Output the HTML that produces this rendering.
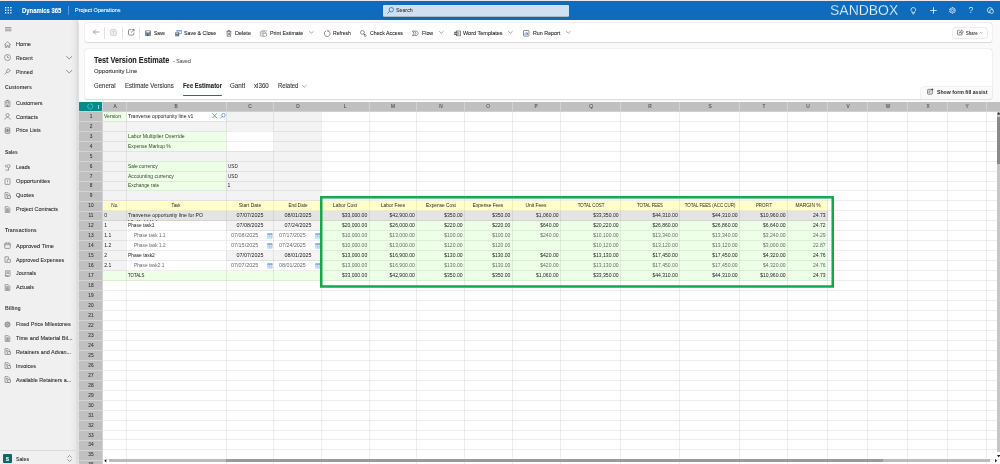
<!DOCTYPE html>
<html lang="en"><head><meta charset="utf-8"><title>Test Version Estimate - Dynamics 365</title>
<style>
html,body{margin:0;padding:0;background:#f5f5f5;}
body{width:1000px;height:464px;overflow:hidden;position:relative;font-family:"Liberation Sans",sans-serif;}
#root{position:absolute;left:0;top:0;width:1000px;height:464px;overflow:hidden;background:#fafafa;}
#txt,#over{position:absolute;left:0;top:0;width:1000px;height:464px;overflow:hidden;will-change:transform;}
.r{position:absolute;display:block;}
.t{position:absolute;white-space:nowrap;display:block;margin:0;padding:0;line-height:20px;height:20px;-webkit-text-stroke:0.08px currentColor;}
svg{overflow:visible;}
</style></head><body><div id="root">
<div class="r" style="left:0.00px;top:0.00px;width:1000.00px;height:19.70px;background:#0f6cbd;"></div>
<div class="r" style="left:0.00px;top:0.00px;width:1000.00px;height:1.00px;background:#ede5ea;"></div>
<svg class="r" style="left:5.20px;top:7.20px;" width="7" height="7" viewBox="0 0 7 7"><rect x="0.00" y="0.00" width="1.3" height="1.3" fill="#fff"/><rect x="0.00" y="2.60" width="1.3" height="1.3" fill="#fff"/><rect x="0.00" y="5.20" width="1.3" height="1.3" fill="#fff"/><rect x="2.60" y="0.00" width="1.3" height="1.3" fill="#fff"/><rect x="2.60" y="2.60" width="1.3" height="1.3" fill="#fff"/><rect x="2.60" y="5.20" width="1.3" height="1.3" fill="#fff"/><rect x="5.20" y="0.00" width="1.3" height="1.3" fill="#fff"/><rect x="5.20" y="2.60" width="1.3" height="1.3" fill="#fff"/><rect x="5.20" y="5.20" width="1.3" height="1.3" fill="#fff"/></svg>
<div class="r" style="left:68.20px;top:6.00px;width:0.50px;height:8.50px;background:rgba(255,255,255,.32);"></div>
<div class="r" style="left:382.80px;top:4.60px;width:186.00px;height:12.00px;background:#cfe0f1;border-radius:1px;box-shadow:inset 0 -0.6px 0 rgba(0,0,0,.35);"></div>
<svg class="r" style="left:387.00px;top:7.00px;" width="7" height="7" viewBox="0 0 7 7"><circle cx="4.3" cy="2.7" r="2.2" fill="none" stroke="#1b62b0" stroke-width=".7"/><path d="M2.7 4.3 L0.3 6.7" stroke="#1b62b0" stroke-width=".7" fill="none"/></svg>
<svg class="r" style="left:910.00px;top:7.00px;" width="7" height="8" viewBox="0 0 7 8"><path d="M3.3 0.5 a2.3 2.3 0 0 1 1.3 4.2 v1 h-2.6 v-1 a2.3 2.3 0 0 1 1.3 -4.2z M2.3 6.8h2" fill="none" stroke="#fff" stroke-width=".7"/></svg>
<svg class="r" style="left:929.50px;top:7.00px;" width="7" height="7" viewBox="0 0 7 7"><path d="M3.5 0.3v6.4M0.3 3.5h6.4" stroke="#fff" stroke-width=".8" fill="none"/></svg>
<svg class="r" style="left:949.00px;top:7.00px;" width="7" height="7" viewBox="0 0 7 7"><circle cx="3.4" cy="3.4" r="2.6" fill="none" stroke="#fff" stroke-width="1.1" stroke-dasharray="1.1 .55"/><circle cx="3.4" cy="3.4" r="1.1" fill="none" stroke="#fff" stroke-width=".6"/></svg>
<svg class="r" style="left:986.50px;top:7.00px;" width="7" height="7" viewBox="0 0 7 7"><circle cx="3" cy="3.2" r="2.6" fill="none" stroke="#fff" stroke-width=".7"/><circle cx="4.6" cy="4.4" r="1.9" fill="#0f6cbd" stroke="#fff" stroke-width=".7"/></svg>
<div class="r" style="left:0.00px;top:19.70px;width:78.20px;height:444.30px;background:linear-gradient(to right,#f0f0f0 0,#f0f0f0 70px,#eaeaea 75px,#d9d9d9 78.2px);box-shadow:.5px 0 .8px rgba(0,0,0,.10);"></div>
<svg class="r" style="left:4.60px;top:26.80px;" width="6.4" height="4.4" viewBox="0 0 6.4 4.4"><path d="M0 .6h6.4 M0 2.2h6.4 M0 3.8h6.4" stroke="#555" stroke-width=".55" fill="none"/></svg>
<svg class="r" style="left:3.90px;top:40.60px;" width="7" height="7" viewBox="0 0 7 7"><path d="M0.4 3.6 L3.5 0.7 L6.6 3.6 M1.3 3 V6.4 H2.8 V4.4 H4.2 V6.4 H5.7 V3" fill="none" stroke="#686868" stroke-width=".6"/></svg>
<svg class="r" style="left:3.90px;top:54.30px;" width="7" height="7" viewBox="0 0 7 7"><circle cx="3.5" cy="3.5" r="3" fill="none" stroke="#686868" stroke-width=".6"/><path d="M3.5 1.7 V3.7 H5" fill="none" stroke="#686868" stroke-width=".6"/></svg>
<svg class="r" style="left:66.00px;top:56.40px;" width="6.4" height="3.2" viewBox="0 0 6.4 3.2"><path d="M0.2 0.2 L3.20 2.90 L6.20 0.2" fill="none" stroke="#5a5a5a" stroke-width="0.65"/></svg>
<svg class="r" style="left:3.90px;top:68.00px;" width="7" height="7" viewBox="0 0 7 7"><path d="M4.2 0.6 L6.4 2.8 L5.2 3.2 L4 4.8 L2.2 3 L3.8 1.8 Z M3 4 L0.5 6.5" fill="none" stroke="#686868" stroke-width=".6"/></svg>
<svg class="r" style="left:66.00px;top:70.10px;" width="6.4" height="3.2" viewBox="0 0 6.4 3.2"><path d="M0.2 0.2 L3.20 2.90 L6.20 0.2" fill="none" stroke="#5a5a5a" stroke-width="0.65"/></svg>
<svg class="r" style="left:3.90px;top:99.50px;" width="7" height="7" viewBox="0 0 7 7"><rect x="1.1" y="1" width="4.8" height="5.6" rx=".3" fill="none" stroke="#686868" stroke-width=".6"/><path d="M2.5 0.4h2 M2.2 2.5h1 M3.8 2.5h1 M2.2 3.9h1 M3.8 3.9h1 M2.9 6.5v-1.2h1.2v1.2" fill="none" stroke="#555" stroke-width=".7"/></svg>
<svg class="r" style="left:3.90px;top:113.20px;" width="7" height="7" viewBox="0 0 7 7"><circle cx="3.5" cy="2.1" r="1.6" fill="none" stroke="#686868" stroke-width=".6"/><path d="M0.8 6.6 C0.8 3.8 6.2 3.8 6.2 6.6" fill="none" stroke="#686868" stroke-width=".6"/></svg>
<svg class="r" style="left:3.90px;top:126.90px;" width="7" height="7" viewBox="0 0 7 7"><rect x="1.2" y="0.8" width="4.6" height="5.6" rx=".7" fill="none" stroke="#686868" stroke-width=".6"/><path d="M1.2 2.3h4.6 M1.2 3.6h4.6 M1.2 4.9h4.6 M3.5 2.3v2.6" fill="none" stroke="#686868" stroke-width=".6" /></svg>
<svg class="r" style="left:3.90px;top:163.70px;" width="7" height="7" viewBox="0 0 7 7"><circle cx="4.6" cy="2.2" r="1.5" fill="none" stroke="#686868" stroke-width=".6"/><path d="M2.6 3.2 C0.8 3.2 0.8 0.8 2.6 1 M4.6 3.7 V6.6 M1.4 5.8 C2.4 6.8 3.6 6.6 4.6 5.2" fill="none" stroke="#686868" stroke-width=".6"/></svg>
<svg class="r" style="left:3.90px;top:177.60px;" width="7" height="7" viewBox="0 0 7 7"><rect x="1" y="0.8" width="5" height="5.6" rx=".5" fill="none" stroke="#686868" stroke-width=".6"/><path d="M3.5 2.2v1.9 M3.5 4.9v.5" fill="none" stroke="#686868" stroke-width=".6"/></svg>
<svg class="r" style="left:3.90px;top:191.70px;" width="7" height="7" viewBox="0 0 7 7"><path d="M1 0.7 H4.2 L5.6 2.1 V6.4 H1 Z M2 2.6h2 M2 3.8h1.2" fill="none" stroke="#686868" stroke-width=".6"/><rect x="3.6" y="3.6" width="2.9" height="2.8" rx=".4" fill="#efefef" stroke="#686868" stroke-width=".6"/></svg>
<svg class="r" style="left:3.90px;top:205.70px;" width="7" height="7" viewBox="0 0 7 7"><path d="M1.2 0.7 H4.3 L5.8 2.2 V6.4 H1.2 Z" fill="none" stroke="#686868" stroke-width=".6"/><path d="M2.2 2.9h2.6 M2.2 4.1h2.6 M2.2 5.2h2.6" fill="none" stroke="#555" stroke-width=".7"/></svg>
<svg class="r" style="left:3.90px;top:242.10px;" width="7" height="7" viewBox="0 0 7 7"><rect x="0.7" y="1.2" width="5.6" height="5.2" rx=".6" fill="none" stroke="#686868" stroke-width=".6"/><path d="M0.7 2.8h5.6 M2.2 0.4v1.4 M4.8 0.4v1.4" fill="none" stroke="#686868" stroke-width=".6"/></svg>
<svg class="r" style="left:3.90px;top:256.00px;" width="7" height="7" viewBox="0 0 7 7"><path d="M1 0.8 H4.4 V3 M1 0.8 V6.3 H3" fill="none" stroke="#686868" stroke-width=".6"/><rect x="3.2" y="3.4" width="3.2" height="3" rx=".4" fill="none" stroke="#686868" stroke-width=".6"/></svg>
<svg class="r" style="left:3.90px;top:269.90px;" width="7" height="7" viewBox="0 0 7 7"><path d="M1.6 0.8 H6 V5.4 C6 6.6 4.4 6.6 4.4 5.6 H1.2 C1.2 6.6 2.6 6.6 4.6 6.5 M1.6 0.8 V5.4 M2.6 2.2h2.4 M2.6 3.4h2.4" fill="none" stroke="#686868" stroke-width=".6"/></svg>
<svg class="r" style="left:3.90px;top:283.90px;" width="7" height="7" viewBox="0 0 7 7"><path d="M1.2 0.7 H4.3 L5.8 2.2 V6.4 H1.2 Z" fill="none" stroke="#686868" stroke-width=".6"/><path d="M2.2 2.9h2.6 M2.2 4.1h2.6 M2.2 5.2h2.6" fill="none" stroke="#555" stroke-width=".7"/></svg>
<svg class="r" style="left:3.90px;top:320.80px;" width="7" height="7" viewBox="0 0 7 7"><circle cx="3.5" cy="3.5" r="2.7" fill="#9a9a9a" stroke="#8a8a8a" stroke-width=".5"/><circle cx="3.5" cy="3.5" r="1.2" fill="none" stroke="#d8d8d8" stroke-width=".5"/></svg>
<svg class="r" style="left:3.90px;top:334.50px;" width="7" height="7" viewBox="0 0 7 7"><path d="M1.2 0.7 H4.3 L5.8 2.2 V6.4 H1.2 Z" fill="none" stroke="#686868" stroke-width=".6"/><path d="M2.2 2.9h2.6 M2.2 4.1h2.6 M2.2 5.2h2.6" fill="none" stroke="#555" stroke-width=".7"/></svg>
<svg class="r" style="left:3.90px;top:348.30px;" width="7" height="7" viewBox="0 0 7 7"><path d="M1 0.7 H4.2 L5.6 2.1 V6.4 H1 Z M2 2.6h2 M2 3.8h1.2" fill="none" stroke="#686868" stroke-width=".6"/><rect x="3.6" y="3.6" width="2.9" height="2.8" rx=".4" fill="#efefef" stroke="#686868" stroke-width=".6"/></svg>
<svg class="r" style="left:3.90px;top:362.20px;" width="7" height="7" viewBox="0 0 7 7"><path d="M1 0.7 H4.2 L5.6 2.1 V6.4 H1 Z M2 2.6h2 M2 3.8h1.2" fill="none" stroke="#686868" stroke-width=".6"/><rect x="3.6" y="3.6" width="2.9" height="2.8" rx=".4" fill="#efefef" stroke="#686868" stroke-width=".6"/></svg>
<svg class="r" style="left:3.90px;top:376.40px;" width="7" height="7" viewBox="0 0 7 7"><path d="M1 0.7 H4.2 L5.6 2.1 V6.4 H1 Z M2 2.6h2 M2 3.8h1.2" fill="none" stroke="#686868" stroke-width=".6"/><rect x="3.6" y="3.6" width="2.9" height="2.8" rx=".4" fill="#efefef" stroke="#686868" stroke-width=".6"/></svg>
<div class="r" style="left:0.00px;top:449.80px;width:78.20px;height:0.50px;background:#dcdcdc;"></div>
<div class="r" style="left:2.60px;top:453.80px;width:9.80px;height:9.40px;background:#0b6a63;border-radius:1px;"></div>
<svg class="r" style="left:66.60px;top:455.20px;" width="5" height="7" viewBox="0 0 5 7"><path d="M0.4 2.6 L2.5 0.5 L4.6 2.6 M0.4 4.4 L2.5 6.5 L4.6 4.4" fill="none" stroke="#5a5a5a" stroke-width=".6"/></svg>
<div class="r" style="left:84.60px;top:23.20px;width:907.60px;height:18.80px;background:#fff;border-radius:2.6px;box-shadow:0 0 1.2px rgba(0,0,0,.22),0 .5px 1px rgba(0,0,0,.10);"></div>
<svg class="r" style="left:93.00px;top:29.30px;" width="6.5" height="6" viewBox="0 0 6.5 6"><path d="M0.4 3 H6.2 M2.9 0.5 L0.4 3 L2.9 5.5" fill="none" stroke="#5a5a5a" stroke-width=".55" stroke-linejoin="miter"/></svg>
<div class="r" style="left:104.35px;top:27.00px;width:0.50px;height:11.60px;background:#e2e2e2;"></div>
<svg class="r" style="left:110.00px;top:29.20px;" width="7" height="7" viewBox="0 0 7 7"><rect x=".4" y=".4" width="6.2" height="6.2" rx="2" fill="#f0f0f0" stroke="#c2c2c2" stroke-width=".7"/><path d="M2.3 2.4h2.4 M3.5 2.4v2.6" stroke="#c2c2c2" stroke-width=".7" fill="none"/></svg>
<div class="r" style="left:122.15px;top:27.00px;width:0.50px;height:11.60px;background:#e2e2e2;"></div>
<svg class="r" style="left:128.00px;top:29.40px;" width="6.5" height="6.5" viewBox="0 0 6.5 6.5"><path d="M3.4 0.6 H1.4 Q0.5 0.6 0.5 1.5 V5.2 Q0.5 6.1 1.4 6.1 H4.9 Q5.8 6.1 5.8 5.2 V3.6 M3.2 3.4 L6 0.6 M4.2 0.5 H6.1 V2.4" fill="none" stroke="#5a5a5a" stroke-width=".65"/></svg>
<div class="r" style="left:139.35px;top:27.00px;width:0.50px;height:11.60px;background:#e2e2e2;"></div>
<svg class="r" style="left:144.70px;top:29.70px;" width="7" height="7" viewBox="0 0 7 7"><rect x=".3" y=".6" width="5.4" height="5.3" rx=".4" fill="#5c5c5c"/><rect x="1.3" y=".9" width="3.3" height="1.7" fill="#f4f4f4"/><rect x="1" y="3.4" width="4" height="2.3" fill="#5b9bd5"/><rect x="2" y="4.3" width="1.2" height="1.4" fill="#444"/></svg>
<svg class="r" style="left:174.80px;top:29.70px;" width="7" height="7" viewBox="0 0 7 7"><rect x="1.9" y=".5" width="4.4" height="3.2" fill="#fff" stroke="#5b8fd6" stroke-width=".6"/><rect x="1.9" y=".5" width="4.4" height=".9" fill="#5b8fd6"/><rect x=".3" y="2.3" width="3.9" height="3.9" rx=".3" fill="#555"/><rect x="1" y="2.6" width="2.3" height="1.1" fill="#f0f0f0"/><rect x=".9" y="4.5" width="2.7" height="1.6" fill="#5b9bd5"/></svg>
<svg class="r" style="left:226.10px;top:29.70px;" width="7" height="7" viewBox="0 0 7 7"><path d="M0.5 1.4 H5.3 M2 1.3 V0.5 H3.8 V1.3 M1 1.5 L1.3 6.3 H4.5 L4.8 1.5 M2.3 2.6 V5.2 M3.5 2.6 V5.2" fill="none" stroke="#444" stroke-width=".6"/></svg>
<svg class="r" style="left:260.20px;top:29.70px;" width="7" height="7" viewBox="0 0 7 7"><rect x=".4" y="1.4" width="4.8" height="4.8" rx=".6" fill="#f3f3f3" stroke="#8a8a8a" stroke-width=".6"/><path d="M1.4 2.8h2.6 M1.4 4h1.6" stroke="#8a8a8a" stroke-width=".5"/><rect x="3.1" y="3.3" width="3.4" height="3" rx=".4" fill="#fff" stroke="#7a7a7a" stroke-width=".6"/><path d="M1.6 .5 h4.6 v2.4" fill="none" stroke="#9a9a9a" stroke-width=".5"/></svg>
<svg class="r" style="left:309.00px;top:31.30px;" width="4.8" height="2.6" viewBox="0 0 4.8 2.6"><path d="M0.2 0.2 L2.40 2.30 L4.60 0.2" fill="none" stroke="#5a5a5a" stroke-width="0.55"/></svg>
<svg class="r" style="left:324.10px;top:29.70px;" width="7" height="7" viewBox="0 0 7 7"><path d="M4.3 0.9 A2.9 2.9 0 1 1 2.1 0.9" fill="none" stroke="#444" stroke-width=".6"/><path d="M3.2 0.1 L4.5 0.9 L3.6 2" fill="none" stroke="#444" stroke-width=".6"/></svg>
<svg class="r" style="left:360.30px;top:29.70px;" width="7" height="7" viewBox="0 0 7 7"><circle cx="2.4" cy="2.4" r="1.9" fill="none" stroke="#444" stroke-width=".6"/><path d="M3.8 3.8 L5.6 5.6" stroke="#444" stroke-width=".9"/><circle cx="5.2" cy="5.4" r="1" fill="#fff" stroke="#444" stroke-width=".5"/></svg>
<svg class="r" style="left:412.00px;top:29.70px;" width="7" height="7" viewBox="0 0 7 7"><path d="M0.4 1 H2.2 L4 3.3 L2.2 5.6 H0.4 L2.1 3.3 Z M2.9 1 H4.6 L6.5 3.3 L4.6 5.6 H2.9" fill="none" stroke="#444" stroke-width=".6"/></svg>
<svg class="r" style="left:438.70px;top:31.30px;" width="4.8" height="2.6" viewBox="0 0 4.8 2.6"><path d="M0.2 0.2 L2.40 2.30 L4.60 0.2" fill="none" stroke="#5a5a5a" stroke-width="0.55"/></svg>
<svg class="r" style="left:453.50px;top:29.70px;" width="7" height="7" viewBox="0 0 7 7"><rect x="2.4" y="1" width="3.9" height="4.8" fill="#fff" stroke="#444" stroke-width=".6"/><path d="M3.4 2.4h2 M3.4 3.4h2 M3.4 4.4h2" stroke="#444" stroke-width=".4"/><rect x=".3" y="1.8" width="3" height="3.2" fill="#4d4d4d"/><path d="M.9 2.6 l.45 1.6 l.45 -1.4 l.45 1.4 l.45 -1.6" stroke="#fff" stroke-width=".35" fill="none"/></svg>
<svg class="r" style="left:508.40px;top:31.30px;" width="4.8" height="2.6" viewBox="0 0 4.8 2.6"><path d="M0.2 0.2 L2.40 2.30 L4.60 0.2" fill="none" stroke="#5a5a5a" stroke-width="0.55"/></svg>
<svg class="r" style="left:523.20px;top:29.70px;" width="7" height="7" viewBox="0 0 7 7"><rect x=".5" y=".5" width="5.4" height="5.6" rx=".6" fill="#fff" stroke="#444" stroke-width=".6"/><path d="M1.9 4.9v-1.6 M3.2 4.9v-3 M4.5 4.9v-2.2" stroke="#3a66b0" stroke-width=".7"/></svg>
<svg class="r" style="left:566.10px;top:31.30px;" width="4.8" height="2.6" viewBox="0 0 4.8 2.6"><path d="M0.2 0.2 L2.40 2.30 L4.60 0.2" fill="none" stroke="#5a5a5a" stroke-width="0.55"/></svg>
<div class="r" style="left:953.00px;top:27.50px;width:34.40px;height:10.00px;background:#fff;border-radius:1.8px;box-shadow:0 0 0 .5px #dcdcdc;"></div>
<svg class="r" style="left:957.00px;top:29.40px;" width="7" height="7" viewBox="0 0 7 7"><path d="M2.8 1.2 H1.4 Q.5 1.2 .5 2.1 V5 Q.5 5.9 1.4 5.9 H4.4 Q5.3 5.9 5.3 5 V4.4 M2.2 4.2 C2.2 2.8 3.2 2.2 4.4 2.2 V1 L6.4 2.8 L4.4 4.6 V3.4 C3.4 3.4 2.8 3.6 2.2 4.2Z" fill="none" stroke="#424242" stroke-width=".6"/></svg>
<svg class="r" style="left:980.40px;top:32.00px;" width="2.8" height="1.6" viewBox="0 0 2.8 1.6"><path d="M0.2 0.2 L1.40 1.30 L2.60 0.2" fill="none" stroke="#5a5a5a" stroke-width="0.5"/></svg>
<div class="r" style="left:84.50px;top:48.50px;width:907.70px;height:50.20px;background:#fff;border-radius:2.6px;box-shadow:0 0 1.2px rgba(0,0,0,.22),0 .5px 1px rgba(0,0,0,.10);"></div>
<div class="r" style="left:183.00px;top:94.50px;width:39.00px;height:1.10px;background:#0f6cbd;border-radius:.5px;"></div>
<svg class="r" style="left:301.60px;top:84.80px;" width="4.6" height="2.5" viewBox="0 0 4.6 2.5"><path d="M0.2 0.2 L2.30 2.20 L4.40 0.2" fill="none" stroke="#5a5a5a" stroke-width="0.55"/></svg>
<div class="r" style="left:921.00px;top:86.50px;width:71.20px;height:12.20px;background:#fafafa;border-radius:2.6px 0 2.6px 0;box-shadow:0 0 0 .5px #e6e6e6;"></div>
<svg class="r" style="left:927.00px;top:88.30px;" width="7" height="7" viewBox="0 0 7 7"><rect x=".5" y="1.4" width="4.8" height="4.8" rx=".7" fill="#e8e8e8" stroke="#4a4a4a" stroke-width=".6"/><path d="M1.6 3h2.2 M1.6 4.4h1.4" stroke="#4a4a4a" stroke-width=".5"/><path d="M5.2 0 l.4 1 l1 .4 l-1 .4 l-.4 1 l-.4 -1 l-1 -.4 l1 -.4z" fill="#333"/></svg>
<div class="r" style="left:79.00px;top:101.70px;width:921.00px;height:362.30px;background:#fff;"></div>
<div class="r" style="left:102.80px;top:111.30px;width:218.70px;height:89.64px;background:#f3f3f3;"></div>
<div class="r" style="left:102.80px;top:111.30px;width:23.70px;height:9.96px;background:#edffe6;"></div>
<div class="r" style="left:126.50px;top:111.30px;width:99.50px;height:9.96px;background:#fff;"></div>
<div class="r" style="left:126.50px;top:131.22px;width:99.50px;height:19.92px;background:#edffe6;"></div>
<div class="r" style="left:226.00px;top:131.22px;width:47.50px;height:19.92px;background:#fff;"></div>
<div class="r" style="left:126.50px;top:161.10px;width:99.50px;height:29.88px;background:#edffe6;"></div>
<div class="r" style="left:102.80px;top:200.94px;width:724.80px;height:9.96px;background:#ffffcc;"></div>
<div class="r" style="left:102.80px;top:210.90px;width:724.80px;height:9.96px;background:#e4e4e4;"></div>
<div class="r" style="left:321.50px;top:220.86px;width:506.10px;height:59.76px;background:#edffe6;"></div>
<div class="r" style="left:102.80px;top:270.66px;width:218.70px;height:9.96px;background:#edffe6;"></div>
<div class="r" style="left:102.80px;top:220.86px;width:23.70px;height:49.80px;background:#f3f3f3;"></div>
<div class="r" style="left:226.00px;top:220.86px;width:95.50px;height:9.96px;background:#f3f3f3;"></div>
<div class="r" style="left:226.00px;top:250.74px;width:95.50px;height:9.96px;background:#f3f3f3;"></div>
<div class="r" style="left:102.80px;top:120.76px;width:897.20px;height:1.00px;background:rgba(0,0,0,.065);"></div>
<div class="r" style="left:102.80px;top:130.72px;width:897.20px;height:1.00px;background:rgba(0,0,0,.065);"></div>
<div class="r" style="left:102.80px;top:140.68px;width:897.20px;height:1.00px;background:rgba(0,0,0,.065);"></div>
<div class="r" style="left:102.80px;top:150.64px;width:897.20px;height:1.00px;background:rgba(0,0,0,.065);"></div>
<div class="r" style="left:102.80px;top:160.60px;width:897.20px;height:1.00px;background:rgba(0,0,0,.065);"></div>
<div class="r" style="left:102.80px;top:170.56px;width:897.20px;height:1.00px;background:rgba(0,0,0,.065);"></div>
<div class="r" style="left:102.80px;top:180.52px;width:897.20px;height:1.00px;background:rgba(0,0,0,.065);"></div>
<div class="r" style="left:102.80px;top:190.48px;width:897.20px;height:1.00px;background:rgba(0,0,0,.065);"></div>
<div class="r" style="left:102.80px;top:200.44px;width:897.20px;height:1.00px;background:rgba(0,0,0,.065);"></div>
<div class="r" style="left:102.80px;top:210.40px;width:897.20px;height:1.00px;background:rgba(0,0,0,.065);"></div>
<div class="r" style="left:102.80px;top:220.36px;width:897.20px;height:1.00px;background:rgba(0,0,0,.065);"></div>
<div class="r" style="left:102.80px;top:230.32px;width:897.20px;height:1.00px;background:rgba(0,0,0,.065);"></div>
<div class="r" style="left:102.80px;top:240.28px;width:897.20px;height:1.00px;background:rgba(0,0,0,.065);"></div>
<div class="r" style="left:102.80px;top:250.24px;width:897.20px;height:1.00px;background:rgba(0,0,0,.065);"></div>
<div class="r" style="left:102.80px;top:260.20px;width:897.20px;height:1.00px;background:rgba(0,0,0,.065);"></div>
<div class="r" style="left:102.80px;top:270.16px;width:897.20px;height:1.00px;background:rgba(0,0,0,.065);"></div>
<div class="r" style="left:102.80px;top:280.12px;width:897.20px;height:1.00px;background:rgba(0,0,0,.065);"></div>
<div class="r" style="left:102.80px;top:290.08px;width:897.20px;height:1.00px;background:rgba(0,0,0,.065);"></div>
<div class="r" style="left:102.80px;top:300.04px;width:897.20px;height:1.00px;background:rgba(0,0,0,.065);"></div>
<div class="r" style="left:102.80px;top:310.00px;width:897.20px;height:1.00px;background:rgba(0,0,0,.065);"></div>
<div class="r" style="left:102.80px;top:319.96px;width:897.20px;height:1.00px;background:rgba(0,0,0,.065);"></div>
<div class="r" style="left:102.80px;top:329.92px;width:897.20px;height:1.00px;background:rgba(0,0,0,.065);"></div>
<div class="r" style="left:102.80px;top:339.88px;width:897.20px;height:1.00px;background:rgba(0,0,0,.065);"></div>
<div class="r" style="left:102.80px;top:349.84px;width:897.20px;height:1.00px;background:rgba(0,0,0,.065);"></div>
<div class="r" style="left:102.80px;top:359.80px;width:897.20px;height:1.00px;background:rgba(0,0,0,.065);"></div>
<div class="r" style="left:102.80px;top:369.76px;width:897.20px;height:1.00px;background:rgba(0,0,0,.065);"></div>
<div class="r" style="left:102.80px;top:379.72px;width:897.20px;height:1.00px;background:rgba(0,0,0,.065);"></div>
<div class="r" style="left:102.80px;top:389.68px;width:897.20px;height:1.00px;background:rgba(0,0,0,.065);"></div>
<div class="r" style="left:102.80px;top:399.64px;width:897.20px;height:1.00px;background:rgba(0,0,0,.065);"></div>
<div class="r" style="left:102.80px;top:409.60px;width:897.20px;height:1.00px;background:rgba(0,0,0,.065);"></div>
<div class="r" style="left:102.80px;top:419.56px;width:897.20px;height:1.00px;background:rgba(0,0,0,.065);"></div>
<div class="r" style="left:102.80px;top:429.52px;width:897.20px;height:1.00px;background:rgba(0,0,0,.065);"></div>
<div class="r" style="left:102.80px;top:439.48px;width:897.20px;height:1.00px;background:rgba(0,0,0,.065);"></div>
<div class="r" style="left:102.80px;top:449.44px;width:897.20px;height:1.00px;background:rgba(0,0,0,.065);"></div>
<div class="r" style="left:102.80px;top:459.40px;width:897.20px;height:1.00px;background:rgba(0,0,0,.065);"></div>
<div class="r" style="left:102.80px;top:469.36px;width:897.20px;height:1.00px;background:rgba(0,0,0,.065);"></div>
<div class="r" style="left:126.00px;top:111.30px;width:1.00px;height:352.70px;background:rgba(0,0,0,.065);"></div>
<div class="r" style="left:225.50px;top:111.30px;width:1.00px;height:352.70px;background:rgba(0,0,0,.065);"></div>
<div class="r" style="left:273.00px;top:111.30px;width:1.00px;height:352.70px;background:rgba(0,0,0,.065);"></div>
<div class="r" style="left:321.00px;top:111.30px;width:1.00px;height:352.70px;background:rgba(0,0,0,.065);"></div>
<div class="r" style="left:368.70px;top:111.30px;width:1.00px;height:352.70px;background:rgba(0,0,0,.065);"></div>
<div class="r" style="left:416.30px;top:111.30px;width:1.00px;height:352.70px;background:rgba(0,0,0,.065);"></div>
<div class="r" style="left:464.00px;top:111.30px;width:1.00px;height:352.70px;background:rgba(0,0,0,.065);"></div>
<div class="r" style="left:511.90px;top:111.30px;width:1.00px;height:352.70px;background:rgba(0,0,0,.065);"></div>
<div class="r" style="left:560.00px;top:111.30px;width:1.00px;height:352.70px;background:rgba(0,0,0,.065);"></div>
<div class="r" style="left:620.00px;top:111.30px;width:1.00px;height:352.70px;background:rgba(0,0,0,.065);"></div>
<div class="r" style="left:679.20px;top:111.30px;width:1.00px;height:352.70px;background:rgba(0,0,0,.065);"></div>
<div class="r" style="left:739.00px;top:111.30px;width:1.00px;height:352.70px;background:rgba(0,0,0,.065);"></div>
<div class="r" style="left:787.00px;top:111.30px;width:1.00px;height:352.70px;background:rgba(0,0,0,.065);"></div>
<div class="r" style="left:827.10px;top:111.30px;width:1.00px;height:352.70px;background:rgba(0,0,0,.065);"></div>
<div class="r" style="left:866.90px;top:111.30px;width:1.00px;height:352.70px;background:rgba(0,0,0,.065);"></div>
<div class="r" style="left:907.10px;top:111.30px;width:1.00px;height:352.70px;background:rgba(0,0,0,.065);"></div>
<div class="r" style="left:946.90px;top:111.30px;width:1.00px;height:352.70px;background:rgba(0,0,0,.065);"></div>
<div class="r" style="left:986.20px;top:111.30px;width:1.00px;height:352.70px;background:rgba(0,0,0,.065);"></div>
<div class="r" style="left:79.00px;top:101.70px;width:921.00px;height:9.60px;background:#c0c0c0;"></div>
<div class="r" style="left:79.00px;top:111.30px;width:23.80px;height:352.70px;background:#c0c0c0;"></div>
<div class="r" style="left:126.10px;top:101.70px;width:0.80px;height:9.60px;background:#d2d2d2;"></div>
<div class="r" style="left:225.60px;top:101.70px;width:0.80px;height:9.60px;background:#d2d2d2;"></div>
<div class="r" style="left:273.10px;top:101.70px;width:0.80px;height:9.60px;background:#d2d2d2;"></div>
<div class="r" style="left:368.80px;top:101.70px;width:0.80px;height:9.60px;background:#d2d2d2;"></div>
<div class="r" style="left:416.40px;top:101.70px;width:0.80px;height:9.60px;background:#d2d2d2;"></div>
<div class="r" style="left:464.10px;top:101.70px;width:0.80px;height:9.60px;background:#d2d2d2;"></div>
<div class="r" style="left:512.00px;top:101.70px;width:0.80px;height:9.60px;background:#d2d2d2;"></div>
<div class="r" style="left:560.10px;top:101.70px;width:0.80px;height:9.60px;background:#d2d2d2;"></div>
<div class="r" style="left:620.10px;top:101.70px;width:0.80px;height:9.60px;background:#d2d2d2;"></div>
<div class="r" style="left:679.30px;top:101.70px;width:0.80px;height:9.60px;background:#d2d2d2;"></div>
<div class="r" style="left:739.10px;top:101.70px;width:0.80px;height:9.60px;background:#d2d2d2;"></div>
<div class="r" style="left:787.10px;top:101.70px;width:0.80px;height:9.60px;background:#d2d2d2;"></div>
<div class="r" style="left:827.20px;top:101.70px;width:0.80px;height:9.60px;background:#d2d2d2;"></div>
<div class="r" style="left:867.00px;top:101.70px;width:0.80px;height:9.60px;background:#d2d2d2;"></div>
<div class="r" style="left:907.20px;top:101.70px;width:0.80px;height:9.60px;background:#d2d2d2;"></div>
<div class="r" style="left:947.00px;top:101.70px;width:0.80px;height:9.60px;background:#d2d2d2;"></div>
<div class="r" style="left:986.30px;top:101.70px;width:0.80px;height:9.60px;background:#d2d2d2;"></div>
<div class="r" style="left:1026.60px;top:101.70px;width:0.80px;height:9.60px;background:#d2d2d2;"></div>
<div class="r" style="left:102.40px;top:101.70px;width:0.80px;height:362.30px;background:#d2d2d2;"></div>
<div class="r" style="left:79.00px;top:120.86px;width:23.60px;height:0.80px;background:#d4d4d4;"></div>
<div class="r" style="left:79.00px;top:130.82px;width:23.60px;height:0.80px;background:#d4d4d4;"></div>
<div class="r" style="left:79.00px;top:140.78px;width:23.60px;height:0.80px;background:#d4d4d4;"></div>
<div class="r" style="left:79.00px;top:150.74px;width:23.60px;height:0.80px;background:#d4d4d4;"></div>
<div class="r" style="left:79.00px;top:160.70px;width:23.60px;height:0.80px;background:#d4d4d4;"></div>
<div class="r" style="left:79.00px;top:170.66px;width:23.60px;height:0.80px;background:#d4d4d4;"></div>
<div class="r" style="left:79.00px;top:180.62px;width:23.60px;height:0.80px;background:#d4d4d4;"></div>
<div class="r" style="left:79.00px;top:190.58px;width:23.60px;height:0.80px;background:#d4d4d4;"></div>
<div class="r" style="left:79.00px;top:200.54px;width:23.60px;height:0.80px;background:#d4d4d4;"></div>
<div class="r" style="left:79.00px;top:210.50px;width:23.60px;height:0.80px;background:#d4d4d4;"></div>
<div class="r" style="left:79.00px;top:220.46px;width:23.60px;height:0.80px;background:#d4d4d4;"></div>
<div class="r" style="left:79.00px;top:230.42px;width:23.60px;height:0.80px;background:#d4d4d4;"></div>
<div class="r" style="left:79.00px;top:240.38px;width:23.60px;height:0.80px;background:#d4d4d4;"></div>
<div class="r" style="left:79.00px;top:250.34px;width:23.60px;height:0.80px;background:#d4d4d4;"></div>
<div class="r" style="left:79.00px;top:260.30px;width:23.60px;height:0.80px;background:#d4d4d4;"></div>
<div class="r" style="left:79.00px;top:270.26px;width:23.60px;height:0.80px;background:#d4d4d4;"></div>
<div class="r" style="left:79.00px;top:280.22px;width:23.60px;height:0.80px;background:#d4d4d4;"></div>
<div class="r" style="left:79.00px;top:290.18px;width:23.60px;height:0.80px;background:#d4d4d4;"></div>
<div class="r" style="left:79.00px;top:300.14px;width:23.60px;height:0.80px;background:#d4d4d4;"></div>
<div class="r" style="left:79.00px;top:310.10px;width:23.60px;height:0.80px;background:#d4d4d4;"></div>
<div class="r" style="left:79.00px;top:320.06px;width:23.60px;height:0.80px;background:#d4d4d4;"></div>
<div class="r" style="left:79.00px;top:330.02px;width:23.60px;height:0.80px;background:#d4d4d4;"></div>
<div class="r" style="left:79.00px;top:339.98px;width:23.60px;height:0.80px;background:#d4d4d4;"></div>
<div class="r" style="left:79.00px;top:349.94px;width:23.60px;height:0.80px;background:#d4d4d4;"></div>
<div class="r" style="left:79.00px;top:359.90px;width:23.60px;height:0.80px;background:#d4d4d4;"></div>
<div class="r" style="left:79.00px;top:369.86px;width:23.60px;height:0.80px;background:#d4d4d4;"></div>
<div class="r" style="left:79.00px;top:379.82px;width:23.60px;height:0.80px;background:#d4d4d4;"></div>
<div class="r" style="left:79.00px;top:389.78px;width:23.60px;height:0.80px;background:#d4d4d4;"></div>
<div class="r" style="left:79.00px;top:399.74px;width:23.60px;height:0.80px;background:#d4d4d4;"></div>
<div class="r" style="left:79.00px;top:409.70px;width:23.60px;height:0.80px;background:#d4d4d4;"></div>
<div class="r" style="left:79.00px;top:419.66px;width:23.60px;height:0.80px;background:#d4d4d4;"></div>
<div class="r" style="left:79.00px;top:429.62px;width:23.60px;height:0.80px;background:#d4d4d4;"></div>
<div class="r" style="left:79.00px;top:439.58px;width:23.60px;height:0.80px;background:#d4d4d4;"></div>
<div class="r" style="left:79.00px;top:449.54px;width:23.60px;height:0.80px;background:#d4d4d4;"></div>
<div class="r" style="left:79.00px;top:459.50px;width:23.60px;height:0.80px;background:#d4d4d4;"></div>
<div class="r" style="left:79.00px;top:469.46px;width:23.60px;height:0.80px;background:#d4d4d4;"></div>
<div class="r" style="left:79.00px;top:110.90px;width:921.00px;height:0.80px;background:#cfcfcf;"></div>
<div class="r" style="left:79.00px;top:101.70px;width:23.30px;height:9.30px;background:#048c8c;border-radius:.8px;"></div>
<svg class="r" style="left:87.00px;top:103.30px;" width="6.5" height="6.5" viewBox="0 0 6.5 6.5"><path d="M4.3 1 A2.6 2.6 0 1 1 2 1.1" fill="none" stroke="#3fe0d8" stroke-width=".7"/><path d="M3.4 0.2 L4.6 1 L3.8 2.1" fill="none" stroke="#3fe0d8" stroke-width=".6"/></svg>
<div class="r" style="left:98.30px;top:104.80px;width:0.60px;height:4.20px;background:#7fe6e0;"></div>
<svg class="r" style="left:212.10px;top:113.20px;" width="5.2" height="5.4" viewBox="0 0 5.2 5.4"><path d="M0.3 0.3 L4.9 5.1 M4.9 0.3 L0.3 5.1" stroke="#3b7bd0" stroke-width=".75" fill="none"/></svg>
<svg class="r" style="left:219.70px;top:113.20px;" width="5.6" height="5.6" viewBox="0 0 5.6 5.6"><circle cx="3.5" cy="2.2" r="1.8" fill="none" stroke="#3b7bd0" stroke-width=".7"/><path d="M2.2 3.5 L0.3 5.4" stroke="#3b7bd0" stroke-width=".75" fill="none"/></svg>
<svg class="r" style="left:267.00px;top:232.92px;" width="5.8" height="5.8" viewBox="0 0 5.8 5.8"><rect x=".3" y=".5" width="5.2" height="5" rx=".3" fill="#a8c8f0"/><rect x=".3" y=".5" width="5.2" height="1.3" fill="#7fabe3"/><path d="M1.6 0v1 M4.2 0v1" stroke="#6b9cdc" stroke-width=".6" fill="none"/><rect x="1.1" y="2.4" width="1.1" height=".9" fill="#fff"/><rect x="3.3" y="2.4" width="1.1" height=".9" fill="#fff"/><rect x="1.1" y="3.9" width="1.1" height=".9" fill="#fff"/><rect x="3.3" y="3.9" width="1.1" height=".9" fill="#eaf2fc"/></svg>
<svg class="r" style="left:314.90px;top:232.92px;" width="5.8" height="5.8" viewBox="0 0 5.8 5.8"><rect x=".3" y=".5" width="5.2" height="5" rx=".3" fill="#a8c8f0"/><rect x=".3" y=".5" width="5.2" height="1.3" fill="#7fabe3"/><path d="M1.6 0v1 M4.2 0v1" stroke="#6b9cdc" stroke-width=".6" fill="none"/><rect x="1.1" y="2.4" width="1.1" height=".9" fill="#fff"/><rect x="3.3" y="2.4" width="1.1" height=".9" fill="#fff"/><rect x="1.1" y="3.9" width="1.1" height=".9" fill="#fff"/><rect x="3.3" y="3.9" width="1.1" height=".9" fill="#eaf2fc"/></svg>
<svg class="r" style="left:267.00px;top:242.88px;" width="5.8" height="5.8" viewBox="0 0 5.8 5.8"><rect x=".3" y=".5" width="5.2" height="5" rx=".3" fill="#a8c8f0"/><rect x=".3" y=".5" width="5.2" height="1.3" fill="#7fabe3"/><path d="M1.6 0v1 M4.2 0v1" stroke="#6b9cdc" stroke-width=".6" fill="none"/><rect x="1.1" y="2.4" width="1.1" height=".9" fill="#fff"/><rect x="3.3" y="2.4" width="1.1" height=".9" fill="#fff"/><rect x="1.1" y="3.9" width="1.1" height=".9" fill="#fff"/><rect x="3.3" y="3.9" width="1.1" height=".9" fill="#eaf2fc"/></svg>
<svg class="r" style="left:314.90px;top:242.88px;" width="5.8" height="5.8" viewBox="0 0 5.8 5.8"><rect x=".3" y=".5" width="5.2" height="5" rx=".3" fill="#a8c8f0"/><rect x=".3" y=".5" width="5.2" height="1.3" fill="#7fabe3"/><path d="M1.6 0v1 M4.2 0v1" stroke="#6b9cdc" stroke-width=".6" fill="none"/><rect x="1.1" y="2.4" width="1.1" height=".9" fill="#fff"/><rect x="3.3" y="2.4" width="1.1" height=".9" fill="#fff"/><rect x="1.1" y="3.9" width="1.1" height=".9" fill="#fff"/><rect x="3.3" y="3.9" width="1.1" height=".9" fill="#eaf2fc"/></svg>
<svg class="r" style="left:267.00px;top:262.80px;" width="5.8" height="5.8" viewBox="0 0 5.8 5.8"><rect x=".3" y=".5" width="5.2" height="5" rx=".3" fill="#a8c8f0"/><rect x=".3" y=".5" width="5.2" height="1.3" fill="#7fabe3"/><path d="M1.6 0v1 M4.2 0v1" stroke="#6b9cdc" stroke-width=".6" fill="none"/><rect x="1.1" y="2.4" width="1.1" height=".9" fill="#fff"/><rect x="3.3" y="2.4" width="1.1" height=".9" fill="#fff"/><rect x="1.1" y="3.9" width="1.1" height=".9" fill="#fff"/><rect x="3.3" y="3.9" width="1.1" height=".9" fill="#eaf2fc"/></svg>
<svg class="r" style="left:314.90px;top:262.80px;" width="5.8" height="5.8" viewBox="0 0 5.8 5.8"><rect x=".3" y=".5" width="5.2" height="5" rx=".3" fill="#a8c8f0"/><rect x=".3" y=".5" width="5.2" height="1.3" fill="#7fabe3"/><path d="M1.6 0v1 M4.2 0v1" stroke="#6b9cdc" stroke-width=".6" fill="none"/><rect x="1.1" y="2.4" width="1.1" height=".9" fill="#fff"/><rect x="3.3" y="2.4" width="1.1" height=".9" fill="#fff"/><rect x="1.1" y="3.9" width="1.1" height=".9" fill="#fff"/><rect x="3.3" y="3.9" width="1.1" height=".9" fill="#eaf2fc"/></svg>
<div class="r" style="left:128.30px;top:219.76px;width:0.60px;height:0.80px;background:rgba(40,40,40,.5);"></div>
<div class="r" style="left:130.60px;top:219.76px;width:0.60px;height:0.80px;background:rgba(40,40,40,.5);"></div>
<div class="r" style="left:132.20px;top:219.76px;width:1.20px;height:0.80px;background:rgba(40,40,40,.5);"></div>
<div class="r" style="left:136.90px;top:219.76px;width:0.60px;height:0.80px;background:rgba(40,40,40,.5);"></div>
<div class="r" style="left:139.40px;top:219.76px;width:0.60px;height:0.80px;background:rgba(40,40,40,.5);"></div>
<div class="r" style="left:143.80px;top:219.76px;width:1.40px;height:0.80px;background:rgba(40,40,40,.5);"></div>
<div class="r" style="left:147.20px;top:219.76px;width:0.60px;height:0.80px;background:rgba(40,40,40,.5);"></div>
<div class="r" style="left:150.30px;top:219.76px;width:0.60px;height:0.80px;background:rgba(40,40,40,.5);"></div>
<div class="r" style="left:152.40px;top:219.76px;width:0.60px;height:0.80px;background:rgba(40,40,40,.5);"></div>
<div class="r" style="left:155.60px;top:219.76px;width:1.80px;height:0.80px;background:rgba(40,40,40,.5);"></div>
<div id="txt">
<span class="t" style="top:1px;font-size:6.7px;color:#fff;font-weight:700;left:22.00px;transform-origin:0 50%;transform:scaleX(0.8807);">Dynamics 365</span>
<span class="t" style="top:0px;font-size:5.9px;color:#fff;left:75.00px;transform-origin:0 50%;transform:scaleX(0.9324);">Project Operations</span>
<span class="t" style="top:0px;font-size:5.8px;color:#3b3b3b;left:396.30px;transform-origin:0 50%;transform:scaleX(0.9088);">Search</span>
<span class="t" style="top:0px;font-size:15px;color:#fff;left:830.00px;transform-origin:0 50%;transform:scaleX(0.9310);-webkit-text-stroke:.3px #0f6cbd;">SANDBOX</span>
<span class="t" style="top:0px;font-size:9.6px;color:#fff;left:971.20px;transform-origin:0 50%;transform:scaleX(0.9000) translateX(-50%);-webkit-text-stroke:.15px #0f6cbd;">?</span>
<span class="t" style="top:34px;font-size:5.85px;color:#2b2b2b;left:16.00px;transform-origin:0 50%;transform:scaleX(0.9619);">Home</span>
<span class="t" style="top:48px;font-size:5.85px;color:#2b2b2b;left:16.00px;transform-origin:0 50%;transform:scaleX(0.8958);">Recent</span>
<span class="t" style="top:62px;font-size:5.85px;color:#2b2b2b;left:16.00px;transform-origin:0 50%;transform:scaleX(0.9119);">Pinned</span>
<span class="t" style="top:77px;font-size:5.85px;color:#3a3a3a;font-weight:700;left:4.50px;transform-origin:0 50%;transform:scaleX(0.8843);-webkit-text-stroke:0;">Customers</span>
<span class="t" style="top:93px;font-size:5.85px;color:#2b2b2b;left:16.00px;transform-origin:0 50%;transform:scaleX(0.9411);">Customers</span>
<span class="t" style="top:107px;font-size:5.85px;color:#2b2b2b;left:16.00px;transform-origin:0 50%;transform:scaleX(0.9539);">Contacts</span>
<span class="t" style="top:120px;font-size:5.85px;color:#2b2b2b;left:16.00px;transform-origin:0 50%;transform:scaleX(0.9122);">Price Lists</span>
<span class="t" style="top:142px;font-size:5.85px;color:#3a3a3a;font-weight:700;left:4.50px;transform-origin:0 50%;transform:scaleX(0.8376);-webkit-text-stroke:0;">Sales</span>
<span class="t" style="top:157px;font-size:5.85px;color:#2b2b2b;left:16.00px;transform-origin:0 50%;transform:scaleX(0.8910);">Leads</span>
<span class="t" style="top:171px;font-size:5.85px;color:#2b2b2b;left:16.00px;transform-origin:0 50%;transform:scaleX(0.9809);">Opportunities</span>
<span class="t" style="top:185px;font-size:5.85px;color:#2b2b2b;left:16.00px;transform-origin:0 50%;transform:scaleX(0.9605);">Quotes</span>
<span class="t" style="top:199px;font-size:5.85px;color:#2b2b2b;left:16.00px;transform-origin:0 50%;transform:scaleX(0.9391);">Project Contracts</span>
<span class="t" style="top:220px;font-size:5.85px;color:#3a3a3a;font-weight:700;left:4.50px;transform-origin:0 50%;transform:scaleX(0.8790);-webkit-text-stroke:0;">Transactions</span>
<span class="t" style="top:236px;font-size:5.85px;color:#2b2b2b;left:16.00px;transform-origin:0 50%;transform:scaleX(0.9666);">Approved Time</span>
<span class="t" style="top:250px;font-size:5.85px;color:#2b2b2b;left:16.00px;transform-origin:0 50%;transform:scaleX(0.9195);">Approved Expenses</span>
<span class="t" style="top:263px;font-size:5.85px;color:#2b2b2b;left:16.00px;transform-origin:0 50%;transform:scaleX(0.9143);">Journals</span>
<span class="t" style="top:277px;font-size:5.85px;color:#2b2b2b;left:16.00px;transform-origin:0 50%;transform:scaleX(0.9337);">Actuals</span>
<span class="t" style="top:298px;font-size:5.85px;color:#3a3a3a;font-weight:700;left:4.50px;transform-origin:0 50%;transform:scaleX(0.8791);-webkit-text-stroke:0;">Billing</span>
<span class="t" style="top:314px;font-size:5.85px;color:#2b2b2b;left:16.00px;transform-origin:0 50%;transform:scaleX(0.9320);">Fixed Price Milestones</span>
<span class="t" style="top:328px;font-size:5.85px;color:#2b2b2b;left:16.00px;transform-origin:0 50%;transform:scaleX(0.9505);">Time and Material Bil...</span>
<span class="t" style="top:342px;font-size:5.85px;color:#2b2b2b;left:16.00px;transform-origin:0 50%;transform:scaleX(0.9302);">Retainers and Advan...</span>
<span class="t" style="top:356px;font-size:5.85px;color:#2b2b2b;left:16.00px;transform-origin:0 50%;transform:scaleX(0.9276);">Invoices</span>
<span class="t" style="top:370px;font-size:5.85px;color:#2b2b2b;left:16.00px;transform-origin:0 50%;transform:scaleX(0.9217);">Available Retainers a...</span>
<span class="t" style="top:449px;font-size:5px;color:#fff;font-weight:700;left:7.50px;transform-origin:0 50%;transform:scaleX(1.0000) translateX(-50%);">S</span>
<span class="t" style="top:449px;font-size:5.85px;color:#2b2b2b;left:16.00px;transform-origin:0 50%;transform:scaleX(0.8889);">Sales</span>
<span class="t" style="top:23px;font-size:5.85px;color:#242424;left:153.90px;transform-origin:0 50%;transform:scaleX(0.8253);">Save</span>
<span class="t" style="top:23px;font-size:5.85px;color:#242424;left:183.90px;transform-origin:0 50%;transform:scaleX(0.9094);">Save &amp; Close</span>
<span class="t" style="top:23px;font-size:5.85px;color:#242424;left:234.90px;transform-origin:0 50%;transform:scaleX(0.9464);">Delete</span>
<span class="t" style="top:23px;font-size:5.85px;color:#242424;left:269.80px;transform-origin:0 50%;transform:scaleX(0.9155);">Print Estimate</span>
<span class="t" style="top:23px;font-size:5.85px;color:#242424;left:333.40px;transform-origin:0 50%;transform:scaleX(0.8745);">Refresh</span>
<span class="t" style="top:23px;font-size:5.85px;color:#242424;left:370.00px;transform-origin:0 50%;transform:scaleX(0.8964);">Check Access</span>
<span class="t" style="top:23px;font-size:5.85px;color:#242424;left:421.90px;transform-origin:0 50%;transform:scaleX(0.9073);">Flow</span>
<span class="t" style="top:23px;font-size:5.85px;color:#242424;left:463.10px;transform-origin:0 50%;transform:scaleX(0.9425);">Word Templates</span>
<span class="t" style="top:23px;font-size:5.85px;color:#242424;left:532.70px;transform-origin:0 50%;transform:scaleX(0.9133);">Run Report</span>
<span class="t" style="top:24px;font-size:4.9px;color:#444;font-weight:700;left:966.00px;transform-origin:0 50%;transform:scaleX(0.8460);-webkit-text-stroke:0;">Share</span>
<span class="t" style="top:50px;font-size:8.4px;color:#242424;font-weight:700;left:94.00px;transform-origin:0 50%;transform:scaleX(0.8702);">Test Version Estimate</span>
<span class="t" style="top:51px;font-size:5px;color:#5c5c5c;left:172.50px;transform-origin:0 50%;transform:scaleX(1.0386);">- Saved</span>
<span class="t" style="top:61px;font-size:5.85px;color:#333;left:94.00px;transform-origin:0 50%;transform:scaleX(1.0072);">Opportunity Line</span>
<span class="t" style="top:76px;font-size:6.3px;color:#333;left:94.00px;transform-origin:0 50%;transform:scaleX(0.9640);">General</span>
<span class="t" style="top:76px;font-size:6.3px;color:#333;left:124.50px;transform-origin:0 50%;transform:scaleX(0.9662);">Estimate Versions</span>
<span class="t" style="top:76px;font-size:6.3px;color:#242424;font-weight:700;left:183.00px;transform-origin:0 50%;transform:scaleX(0.9362);">Fee Estimator</span>
<span class="t" style="top:76px;font-size:6.3px;color:#333;left:230.00px;transform-origin:0 50%;transform:scaleX(0.9931);">Gantt</span>
<span class="t" style="top:76px;font-size:6.3px;color:#333;left:254.00px;transform-origin:0 50%;transform:scaleX(0.9826);">xl360</span>
<span class="t" style="top:76px;font-size:6.3px;color:#333;left:277.60px;transform-origin:0 50%;transform:scaleX(0.9393);">Related</span>
<span class="t" style="top:82px;font-size:5.6px;color:#2a2a2a;font-weight:700;left:936.60px;transform-origin:0 50%;transform:scaleX(0.9264);-webkit-text-stroke:0;">Show form fill assist</span>
<span class="t" style="top:96px;font-size:5.0px;color:#484848;left:114.65px;transform-origin:0 50%;transform:scaleX(0.9500) translateX(-50%);">A</span>
<span class="t" style="top:96px;font-size:5.0px;color:#484848;left:176.25px;transform-origin:0 50%;transform:scaleX(0.9500) translateX(-50%);">B</span>
<span class="t" style="top:96px;font-size:5.0px;color:#484848;left:249.75px;transform-origin:0 50%;transform:scaleX(0.9500) translateX(-50%);">C</span>
<span class="t" style="top:96px;font-size:5.0px;color:#484848;left:297.50px;transform-origin:0 50%;transform:scaleX(0.9500) translateX(-50%);">D</span>
<span class="t" style="top:96px;font-size:5.0px;color:#484848;left:345.35px;transform-origin:0 50%;transform:scaleX(0.9500) translateX(-50%);">L</span>
<span class="t" style="top:96px;font-size:5.0px;color:#484848;left:393.00px;transform-origin:0 50%;transform:scaleX(0.9500) translateX(-50%);">M</span>
<span class="t" style="top:96px;font-size:5.0px;color:#484848;left:440.65px;transform-origin:0 50%;transform:scaleX(0.9500) translateX(-50%);">N</span>
<span class="t" style="top:96px;font-size:5.0px;color:#484848;left:488.45px;transform-origin:0 50%;transform:scaleX(0.9500) translateX(-50%);">O</span>
<span class="t" style="top:96px;font-size:5.0px;color:#484848;left:536.45px;transform-origin:0 50%;transform:scaleX(0.9500) translateX(-50%);">P</span>
<span class="t" style="top:96px;font-size:5.0px;color:#484848;left:590.50px;transform-origin:0 50%;transform:scaleX(0.9500) translateX(-50%);">Q</span>
<span class="t" style="top:96px;font-size:5.0px;color:#484848;left:650.10px;transform-origin:0 50%;transform:scaleX(0.9500) translateX(-50%);">R</span>
<span class="t" style="top:96px;font-size:5.0px;color:#484848;left:709.60px;transform-origin:0 50%;transform:scaleX(0.9500) translateX(-50%);">S</span>
<span class="t" style="top:96px;font-size:5.0px;color:#484848;left:763.50px;transform-origin:0 50%;transform:scaleX(0.9500) translateX(-50%);">T</span>
<span class="t" style="top:96px;font-size:5.0px;color:#484848;left:807.55px;transform-origin:0 50%;transform:scaleX(0.9500) translateX(-50%);">U</span>
<span class="t" style="top:96px;font-size:5.0px;color:#484848;left:847.50px;transform-origin:0 50%;transform:scaleX(0.9500) translateX(-50%);">V</span>
<span class="t" style="top:96px;font-size:5.0px;color:#484848;left:887.50px;transform-origin:0 50%;transform:scaleX(0.9500) translateX(-50%);">W</span>
<span class="t" style="top:96px;font-size:5.0px;color:#484848;left:927.50px;transform-origin:0 50%;transform:scaleX(0.9500) translateX(-50%);">X</span>
<span class="t" style="top:96px;font-size:5.0px;color:#484848;left:967.05px;transform-origin:0 50%;transform:scaleX(0.9500) translateX(-50%);">Y</span>
<span class="t" style="top:106px;font-size:5.0px;color:#333;left:90.80px;transform-origin:0 50%;transform:scaleX(0.9500) translateX(-50%);">1</span>
<span class="t" style="top:116px;font-size:5.0px;color:#333;left:90.80px;transform-origin:0 50%;transform:scaleX(0.9500) translateX(-50%);">2</span>
<span class="t" style="top:126px;font-size:5.0px;color:#333;left:90.80px;transform-origin:0 50%;transform:scaleX(0.9500) translateX(-50%);">3</span>
<span class="t" style="top:136px;font-size:5.0px;color:#333;left:90.80px;transform-origin:0 50%;transform:scaleX(0.9500) translateX(-50%);">4</span>
<span class="t" style="top:146px;font-size:5.0px;color:#333;left:90.80px;transform-origin:0 50%;transform:scaleX(0.9500) translateX(-50%);">5</span>
<span class="t" style="top:156px;font-size:5.0px;color:#333;left:90.80px;transform-origin:0 50%;transform:scaleX(0.9500) translateX(-50%);">6</span>
<span class="t" style="top:166px;font-size:5.0px;color:#333;left:90.80px;transform-origin:0 50%;transform:scaleX(0.9500) translateX(-50%);">7</span>
<span class="t" style="top:175px;font-size:5.0px;color:#333;left:90.80px;transform-origin:0 50%;transform:scaleX(0.9500) translateX(-50%);">8</span>
<span class="t" style="top:185px;font-size:5.0px;color:#333;left:90.80px;transform-origin:0 50%;transform:scaleX(0.9500) translateX(-50%);">9</span>
<span class="t" style="top:195px;font-size:5.0px;color:#333;left:90.80px;transform-origin:0 50%;transform:scaleX(0.9500) translateX(-50%);">10</span>
<span class="t" style="top:205px;font-size:5.0px;color:#333;left:90.80px;transform-origin:0 50%;transform:scaleX(0.9500) translateX(-50%);">11</span>
<span class="t" style="top:215px;font-size:5.0px;color:#333;left:90.80px;transform-origin:0 50%;transform:scaleX(0.9500) translateX(-50%);">12</span>
<span class="t" style="top:225px;font-size:5.0px;color:#333;left:90.80px;transform-origin:0 50%;transform:scaleX(0.9500) translateX(-50%);">13</span>
<span class="t" style="top:235px;font-size:5.0px;color:#333;left:90.80px;transform-origin:0 50%;transform:scaleX(0.9500) translateX(-50%);">14</span>
<span class="t" style="top:245px;font-size:5.0px;color:#333;left:90.80px;transform-origin:0 50%;transform:scaleX(0.9500) translateX(-50%);">15</span>
<span class="t" style="top:255px;font-size:5.0px;color:#333;left:90.80px;transform-origin:0 50%;transform:scaleX(0.9500) translateX(-50%);">16</span>
<span class="t" style="top:265px;font-size:5.0px;color:#333;left:90.80px;transform-origin:0 50%;transform:scaleX(0.9500) translateX(-50%);">17</span>
<span class="t" style="top:275px;font-size:5.0px;color:#333;left:90.80px;transform-origin:0 50%;transform:scaleX(0.9500) translateX(-50%);">18</span>
<span class="t" style="top:285px;font-size:5.0px;color:#333;left:90.80px;transform-origin:0 50%;transform:scaleX(0.9500) translateX(-50%);">19</span>
<span class="t" style="top:295px;font-size:5.0px;color:#333;left:90.80px;transform-origin:0 50%;transform:scaleX(0.9500) translateX(-50%);">20</span>
<span class="t" style="top:305px;font-size:5.0px;color:#333;left:90.80px;transform-origin:0 50%;transform:scaleX(0.9500) translateX(-50%);">21</span>
<span class="t" style="top:315px;font-size:5.0px;color:#333;left:90.80px;transform-origin:0 50%;transform:scaleX(0.9500) translateX(-50%);">22</span>
<span class="t" style="top:325px;font-size:5.0px;color:#333;left:90.80px;transform-origin:0 50%;transform:scaleX(0.9500) translateX(-50%);">23</span>
<span class="t" style="top:335px;font-size:5.0px;color:#333;left:90.80px;transform-origin:0 50%;transform:scaleX(0.9500) translateX(-50%);">24</span>
<span class="t" style="top:345px;font-size:5.0px;color:#333;left:90.80px;transform-origin:0 50%;transform:scaleX(0.9500) translateX(-50%);">25</span>
<span class="t" style="top:355px;font-size:5.0px;color:#333;left:90.80px;transform-origin:0 50%;transform:scaleX(0.9500) translateX(-50%);">26</span>
<span class="t" style="top:365px;font-size:5.0px;color:#333;left:90.80px;transform-origin:0 50%;transform:scaleX(0.9500) translateX(-50%);">27</span>
<span class="t" style="top:375px;font-size:5.0px;color:#333;left:90.80px;transform-origin:0 50%;transform:scaleX(0.9500) translateX(-50%);">28</span>
<span class="t" style="top:385px;font-size:5.0px;color:#333;left:90.80px;transform-origin:0 50%;transform:scaleX(0.9500) translateX(-50%);">29</span>
<span class="t" style="top:395px;font-size:5.0px;color:#333;left:90.80px;transform-origin:0 50%;transform:scaleX(0.9500) translateX(-50%);">30</span>
<span class="t" style="top:405px;font-size:5.0px;color:#333;left:90.80px;transform-origin:0 50%;transform:scaleX(0.9500) translateX(-50%);">31</span>
<span class="t" style="top:415px;font-size:5.0px;color:#333;left:90.80px;transform-origin:0 50%;transform:scaleX(0.9500) translateX(-50%);">32</span>
<span class="t" style="top:425px;font-size:5.0px;color:#333;left:90.80px;transform-origin:0 50%;transform:scaleX(0.9500) translateX(-50%);">33</span>
<span class="t" style="top:434px;font-size:5.0px;color:#333;left:90.80px;transform-origin:0 50%;transform:scaleX(0.9500) translateX(-50%);">34</span>
<span class="t" style="top:444px;font-size:5.0px;color:#333;left:90.80px;transform-origin:0 50%;transform:scaleX(0.9500) translateX(-50%);">35</span>
<span class="t" style="top:454px;font-size:5.0px;color:#333;left:90.80px;transform-origin:0 50%;transform:scaleX(0.9500) translateX(-50%);">36</span>
<span class="t" style="top:106px;font-size:5.05px;color:#39452f;left:104.30px;transform-origin:0 50%;transform:scaleX(1.0093);-webkit-text-stroke:0;">Version</span>
<span class="t" style="top:106px;font-size:5.05px;color:#222;left:128.00px;transform-origin:0 50%;transform:scaleX(1.0061);-webkit-text-stroke:0;">Tranverse opportunity line v1</span>
<span class="t" style="top:126px;font-size:5.05px;color:#39452f;left:128.00px;transform-origin:0 50%;transform:scaleX(1.0260);-webkit-text-stroke:0;">Labor Multiplier Override</span>
<span class="t" style="top:136px;font-size:5.05px;color:#39452f;left:128.00px;transform-origin:0 50%;transform:scaleX(0.9757);-webkit-text-stroke:0;">Expense Markup %</span>
<span class="t" style="top:156px;font-size:5.05px;color:#39452f;left:128.00px;transform-origin:0 50%;transform:scaleX(0.9624);-webkit-text-stroke:0;">Sale currency</span>
<span class="t" style="top:166px;font-size:5.05px;color:#39452f;left:128.00px;transform-origin:0 50%;transform:scaleX(1.0014);-webkit-text-stroke:0;">Accounting currency</span>
<span class="t" style="top:175px;font-size:5.05px;color:#39452f;left:128.00px;transform-origin:0 50%;transform:scaleX(0.9586);-webkit-text-stroke:0;">Exchange rate</span>
<span class="t" style="top:156px;font-size:5.05px;color:#222;left:227.50px;transform-origin:0 50%;transform:scaleX(0.9103);-webkit-text-stroke:0;">USD</span>
<span class="t" style="top:166px;font-size:5.05px;color:#222;left:227.50px;transform-origin:0 50%;transform:scaleX(0.9103);-webkit-text-stroke:0;">USD</span>
<span class="t" style="top:175px;font-size:5.05px;color:#222;left:227.50px;transform-origin:0 50%;transform:scaleX(1.0000);-webkit-text-stroke:0;">1</span>
<span class="t" style="top:195px;font-size:5.05px;color:#2a2a20;left:114.65px;transform-origin:0 50%;transform:scaleX(0.9288) translateX(-50%);-webkit-text-stroke:0;">No.</span>
<span class="t" style="top:195px;font-size:5.05px;color:#2a2a20;left:176.25px;transform-origin:0 50%;transform:scaleX(0.8758) translateX(-50%);-webkit-text-stroke:0;">Task</span>
<span class="t" style="top:195px;font-size:5.05px;color:#2a2a20;left:249.75px;transform-origin:0 50%;transform:scaleX(0.9853) translateX(-50%);-webkit-text-stroke:0;">Start Date</span>
<span class="t" style="top:195px;font-size:5.05px;color:#2a2a20;left:297.50px;transform-origin:0 50%;transform:scaleX(0.9027) translateX(-50%);-webkit-text-stroke:0;">End Date</span>
<span class="t" style="top:195px;font-size:5.05px;color:#2a2a20;left:345.35px;transform-origin:0 50%;transform:scaleX(0.9803) translateX(-50%);-webkit-text-stroke:0;">Labor Cost</span>
<span class="t" style="top:195px;font-size:5.05px;color:#2a2a20;left:393.00px;transform-origin:0 50%;transform:scaleX(0.9479) translateX(-50%);-webkit-text-stroke:0;">Labor Fees</span>
<span class="t" style="top:195px;font-size:5.05px;color:#2a2a20;left:440.65px;transform-origin:0 50%;transform:scaleX(0.9516) translateX(-50%);-webkit-text-stroke:0;">Expense Cost</span>
<span class="t" style="top:195px;font-size:5.05px;color:#2a2a20;left:488.45px;transform-origin:0 50%;transform:scaleX(0.9422) translateX(-50%);-webkit-text-stroke:0;">Expense Fees</span>
<span class="t" style="top:195px;font-size:5.05px;color:#2a2a20;left:536.45px;transform-origin:0 50%;transform:scaleX(0.9764) translateX(-50%);-webkit-text-stroke:0;">Unit Fees</span>
<span class="t" style="top:195px;font-size:5.05px;color:#2a2a20;left:590.50px;transform-origin:0 50%;transform:scaleX(0.8568) translateX(-50%);-webkit-text-stroke:0;">TOTAL COST</span>
<span class="t" style="top:195px;font-size:5.05px;color:#2a2a20;left:650.10px;transform-origin:0 50%;transform:scaleX(0.8608) translateX(-50%);-webkit-text-stroke:0;">TOTAL FEES</span>
<span class="t" style="top:195px;font-size:5.05px;color:#2a2a20;left:709.60px;transform-origin:0 50%;transform:scaleX(0.8748) translateX(-50%);-webkit-text-stroke:0;">TOTAL FEES (ACC CUR)</span>
<span class="t" style="top:195px;font-size:5.05px;color:#2a2a20;left:763.50px;transform-origin:0 50%;transform:scaleX(0.8749) translateX(-50%);-webkit-text-stroke:0;">PROFIT</span>
<span class="t" style="top:195px;font-size:5.05px;color:#2a2a20;left:807.55px;transform-origin:0 50%;transform:scaleX(0.9663) translateX(-50%);-webkit-text-stroke:0;">MARGIN %</span>
<span class="t" style="top:205px;font-size:5.05px;color:#222;left:104.30px;transform-origin:0 50%;transform:scaleX(1.0000);-webkit-text-stroke:0;">0</span>
<span class="t" style="top:205px;font-size:5.05px;color:#222;left:128.00px;transform-origin:0 50%;transform:scaleX(1.0100);-webkit-text-stroke:0;">Tranverse opportunity line for PO</span>
<span class="t" style="top:205px;font-size:5.05px;color:#222;left:249.75px;transform-origin:0 50%;transform:scaleX(1.0607) translateX(-50%);-webkit-text-stroke:0;">07/07/2025</span>
<span class="t" style="top:205px;font-size:5.05px;color:#222;left:297.50px;transform-origin:0 50%;transform:scaleX(1.0607) translateX(-50%);-webkit-text-stroke:0;">08/01/2025</span>
<span class="t" style="top:205px;font-size:5.05px;color:#222;right:632.80px;transform-origin:100% 50%;transform:scaleX(1.0000);-webkit-text-stroke:0;">$33,000.00</span>
<span class="t" style="top:205px;font-size:5.05px;color:#222;right:585.20px;transform-origin:100% 50%;transform:scaleX(1.0000);-webkit-text-stroke:0;">$42,900.00</span>
<span class="t" style="top:205px;font-size:5.05px;color:#222;right:537.50px;transform-origin:100% 50%;transform:scaleX(1.0000);-webkit-text-stroke:0;">$350.00</span>
<span class="t" style="top:205px;font-size:5.05px;color:#222;right:489.60px;transform-origin:100% 50%;transform:scaleX(1.0000);-webkit-text-stroke:0;">$350.00</span>
<span class="t" style="top:205px;font-size:5.05px;color:#222;right:441.50px;transform-origin:100% 50%;transform:scaleX(1.0000);-webkit-text-stroke:0;">$1,060.00</span>
<span class="t" style="top:205px;font-size:5.05px;color:#222;right:381.50px;transform-origin:100% 50%;transform:scaleX(1.0000);-webkit-text-stroke:0;">$33,350.00</span>
<span class="t" style="top:205px;font-size:5.05px;color:#222;right:322.30px;transform-origin:100% 50%;transform:scaleX(1.0000);-webkit-text-stroke:0;">$44,310.00</span>
<span class="t" style="top:205px;font-size:5.05px;color:#222;right:262.50px;transform-origin:100% 50%;transform:scaleX(1.0000);-webkit-text-stroke:0;">$44,310.00</span>
<span class="t" style="top:205px;font-size:5.05px;color:#222;right:214.50px;transform-origin:100% 50%;transform:scaleX(1.0000);-webkit-text-stroke:0;">$10,960.00</span>
<span class="t" style="top:205px;font-size:5.05px;color:#222;right:174.40px;transform-origin:100% 50%;transform:scaleX(1.0000);-webkit-text-stroke:0;">24.73</span>
<span class="t" style="top:215px;font-size:5.05px;color:#222;left:104.30px;transform-origin:0 50%;transform:scaleX(1.0000);-webkit-text-stroke:0;">1</span>
<span class="t" style="top:215px;font-size:5.05px;color:#222;left:128.00px;transform-origin:0 50%;transform:scaleX(0.9467);-webkit-text-stroke:0;">Phase task1</span>
<span class="t" style="top:215px;font-size:5.05px;color:#222;left:249.75px;transform-origin:0 50%;transform:scaleX(1.0607) translateX(-50%);-webkit-text-stroke:0;">07/08/2025</span>
<span class="t" style="top:215px;font-size:5.05px;color:#222;left:297.50px;transform-origin:0 50%;transform:scaleX(1.0607) translateX(-50%);-webkit-text-stroke:0;">07/24/2025</span>
<span class="t" style="top:215px;font-size:5.05px;color:#222;right:632.80px;transform-origin:100% 50%;transform:scaleX(1.0000);-webkit-text-stroke:0;">$20,000.00</span>
<span class="t" style="top:215px;font-size:5.05px;color:#222;right:585.20px;transform-origin:100% 50%;transform:scaleX(1.0000);-webkit-text-stroke:0;">$26,000.00</span>
<span class="t" style="top:215px;font-size:5.05px;color:#222;right:537.50px;transform-origin:100% 50%;transform:scaleX(1.0000);-webkit-text-stroke:0;">$220.00</span>
<span class="t" style="top:215px;font-size:5.05px;color:#222;right:489.60px;transform-origin:100% 50%;transform:scaleX(1.0000);-webkit-text-stroke:0;">$220.00</span>
<span class="t" style="top:215px;font-size:5.05px;color:#222;right:441.50px;transform-origin:100% 50%;transform:scaleX(1.0000);-webkit-text-stroke:0;">$640.00</span>
<span class="t" style="top:215px;font-size:5.05px;color:#222;right:381.50px;transform-origin:100% 50%;transform:scaleX(1.0000);-webkit-text-stroke:0;">$20,220.00</span>
<span class="t" style="top:215px;font-size:5.05px;color:#222;right:322.30px;transform-origin:100% 50%;transform:scaleX(1.0000);-webkit-text-stroke:0;">$26,860.00</span>
<span class="t" style="top:215px;font-size:5.05px;color:#222;right:262.50px;transform-origin:100% 50%;transform:scaleX(1.0000);-webkit-text-stroke:0;">$26,860.00</span>
<span class="t" style="top:215px;font-size:5.05px;color:#222;right:214.50px;transform-origin:100% 50%;transform:scaleX(1.0000);-webkit-text-stroke:0;">$6,640.00</span>
<span class="t" style="top:215px;font-size:5.05px;color:#222;right:174.40px;transform-origin:100% 50%;transform:scaleX(1.0000);-webkit-text-stroke:0;">24.72</span>
<span class="t" style="top:225px;font-size:5.05px;color:#222;left:104.30px;transform-origin:0 50%;transform:scaleX(1.0000);-webkit-text-stroke:0;">1.1</span>
<span class="t" style="top:225px;font-size:5.05px;color:#6a6a6a;left:134.00px;transform-origin:0 50%;transform:scaleX(0.9434);-webkit-text-stroke:0;">Phase task 1.1</span>
<span class="t" style="top:225px;font-size:5.05px;color:#6a6a6a;left:231.00px;transform-origin:0 50%;transform:scaleX(1.0805);-webkit-text-stroke:0;">07/08/2025</span>
<span class="t" style="top:225px;font-size:5.05px;color:#6a6a6a;left:279.10px;transform-origin:0 50%;transform:scaleX(1.0607);-webkit-text-stroke:0;">07/17/2025</span>
<span class="t" style="top:225px;font-size:5.05px;color:#6a6a6a;right:632.80px;transform-origin:100% 50%;transform:scaleX(1.0000);-webkit-text-stroke:0;">$10,000.00</span>
<span class="t" style="top:225px;font-size:5.05px;color:#6a6a6a;right:585.20px;transform-origin:100% 50%;transform:scaleX(1.0000);-webkit-text-stroke:0;">$13,000.00</span>
<span class="t" style="top:225px;font-size:5.05px;color:#6a6a6a;right:537.50px;transform-origin:100% 50%;transform:scaleX(1.0000);-webkit-text-stroke:0;">$100.00</span>
<span class="t" style="top:225px;font-size:5.05px;color:#6a6a6a;right:489.60px;transform-origin:100% 50%;transform:scaleX(1.0000);-webkit-text-stroke:0;">$100.00</span>
<span class="t" style="top:225px;font-size:5.05px;color:#6a6a6a;right:441.50px;transform-origin:100% 50%;transform:scaleX(1.0000);-webkit-text-stroke:0;">$240.00</span>
<span class="t" style="top:225px;font-size:5.05px;color:#6a6a6a;right:381.50px;transform-origin:100% 50%;transform:scaleX(1.0000);-webkit-text-stroke:0;">$10,100.00</span>
<span class="t" style="top:225px;font-size:5.05px;color:#6a6a6a;right:322.30px;transform-origin:100% 50%;transform:scaleX(1.0000);-webkit-text-stroke:0;">$13,340.00</span>
<span class="t" style="top:225px;font-size:5.05px;color:#6a6a6a;right:262.50px;transform-origin:100% 50%;transform:scaleX(1.0000);-webkit-text-stroke:0;">$13,340.00</span>
<span class="t" style="top:225px;font-size:5.05px;color:#6a6a6a;right:214.50px;transform-origin:100% 50%;transform:scaleX(1.0000);-webkit-text-stroke:0;">$3,240.00</span>
<span class="t" style="top:225px;font-size:5.05px;color:#6a6a6a;right:174.40px;transform-origin:100% 50%;transform:scaleX(1.0000);-webkit-text-stroke:0;">24.29</span>
<span class="t" style="top:235px;font-size:5.05px;color:#222;left:104.30px;transform-origin:0 50%;transform:scaleX(1.0000);-webkit-text-stroke:0;">1.2</span>
<span class="t" style="top:235px;font-size:5.05px;color:#6a6a6a;left:134.00px;transform-origin:0 50%;transform:scaleX(0.9494);-webkit-text-stroke:0;">Phase task 1.2</span>
<span class="t" style="top:235px;font-size:5.05px;color:#6a6a6a;left:231.00px;transform-origin:0 50%;transform:scaleX(1.0805);-webkit-text-stroke:0;">07/15/2025</span>
<span class="t" style="top:235px;font-size:5.05px;color:#6a6a6a;left:279.10px;transform-origin:0 50%;transform:scaleX(1.0607);-webkit-text-stroke:0;">07/24/2025</span>
<span class="t" style="top:235px;font-size:5.05px;color:#6a6a6a;right:632.80px;transform-origin:100% 50%;transform:scaleX(1.0000);-webkit-text-stroke:0;">$10,000.00</span>
<span class="t" style="top:235px;font-size:5.05px;color:#6a6a6a;right:585.20px;transform-origin:100% 50%;transform:scaleX(1.0000);-webkit-text-stroke:0;">$13,000.00</span>
<span class="t" style="top:235px;font-size:5.05px;color:#6a6a6a;right:537.50px;transform-origin:100% 50%;transform:scaleX(1.0000);-webkit-text-stroke:0;">$120.00</span>
<span class="t" style="top:235px;font-size:5.05px;color:#6a6a6a;right:489.60px;transform-origin:100% 50%;transform:scaleX(1.0000);-webkit-text-stroke:0;">$120.00</span>
<span class="t" style="top:235px;font-size:5.05px;color:#6a6a6a;right:381.50px;transform-origin:100% 50%;transform:scaleX(1.0000);-webkit-text-stroke:0;">$10,120.00</span>
<span class="t" style="top:235px;font-size:5.05px;color:#6a6a6a;right:322.30px;transform-origin:100% 50%;transform:scaleX(1.0000);-webkit-text-stroke:0;">$13,120.00</span>
<span class="t" style="top:235px;font-size:5.05px;color:#6a6a6a;right:262.50px;transform-origin:100% 50%;transform:scaleX(1.0000);-webkit-text-stroke:0;">$13,120.00</span>
<span class="t" style="top:235px;font-size:5.05px;color:#6a6a6a;right:214.50px;transform-origin:100% 50%;transform:scaleX(1.0000);-webkit-text-stroke:0;">$3,000.00</span>
<span class="t" style="top:235px;font-size:5.05px;color:#6a6a6a;right:174.40px;transform-origin:100% 50%;transform:scaleX(1.0000);-webkit-text-stroke:0;">22.87</span>
<span class="t" style="top:245px;font-size:5.05px;color:#222;left:104.30px;transform-origin:0 50%;transform:scaleX(1.0000);-webkit-text-stroke:0;">2</span>
<span class="t" style="top:245px;font-size:5.05px;color:#222;left:128.00px;transform-origin:0 50%;transform:scaleX(0.9647);-webkit-text-stroke:0;">Phase task2</span>
<span class="t" style="top:245px;font-size:5.05px;color:#222;left:249.75px;transform-origin:0 50%;transform:scaleX(1.0607) translateX(-50%);-webkit-text-stroke:0;">07/07/2025</span>
<span class="t" style="top:245px;font-size:5.05px;color:#222;left:297.50px;transform-origin:0 50%;transform:scaleX(1.0607) translateX(-50%);-webkit-text-stroke:0;">08/01/2025</span>
<span class="t" style="top:245px;font-size:5.05px;color:#222;right:632.80px;transform-origin:100% 50%;transform:scaleX(1.0000);-webkit-text-stroke:0;">$13,000.00</span>
<span class="t" style="top:245px;font-size:5.05px;color:#222;right:585.20px;transform-origin:100% 50%;transform:scaleX(1.0000);-webkit-text-stroke:0;">$16,900.00</span>
<span class="t" style="top:245px;font-size:5.05px;color:#222;right:537.50px;transform-origin:100% 50%;transform:scaleX(1.0000);-webkit-text-stroke:0;">$130.00</span>
<span class="t" style="top:245px;font-size:5.05px;color:#222;right:489.60px;transform-origin:100% 50%;transform:scaleX(1.0000);-webkit-text-stroke:0;">$130.00</span>
<span class="t" style="top:245px;font-size:5.05px;color:#222;right:441.50px;transform-origin:100% 50%;transform:scaleX(1.0000);-webkit-text-stroke:0;">$420.00</span>
<span class="t" style="top:245px;font-size:5.05px;color:#222;right:381.50px;transform-origin:100% 50%;transform:scaleX(1.0000);-webkit-text-stroke:0;">$13,130.00</span>
<span class="t" style="top:245px;font-size:5.05px;color:#222;right:322.30px;transform-origin:100% 50%;transform:scaleX(1.0000);-webkit-text-stroke:0;">$17,450.00</span>
<span class="t" style="top:245px;font-size:5.05px;color:#222;right:262.50px;transform-origin:100% 50%;transform:scaleX(1.0000);-webkit-text-stroke:0;">$17,450.00</span>
<span class="t" style="top:245px;font-size:5.05px;color:#222;right:214.50px;transform-origin:100% 50%;transform:scaleX(1.0000);-webkit-text-stroke:0;">$4,320.00</span>
<span class="t" style="top:245px;font-size:5.05px;color:#222;right:174.40px;transform-origin:100% 50%;transform:scaleX(1.0000);-webkit-text-stroke:0;">24.76</span>
<span class="t" style="top:255px;font-size:5.05px;color:#222;left:104.30px;transform-origin:0 50%;transform:scaleX(1.0000);-webkit-text-stroke:0;">2.1</span>
<span class="t" style="top:255px;font-size:5.05px;color:#6a6a6a;left:134.00px;transform-origin:0 50%;transform:scaleX(0.9505);-webkit-text-stroke:0;">Phase task2.1</span>
<span class="t" style="top:255px;font-size:5.05px;color:#6a6a6a;left:231.00px;transform-origin:0 50%;transform:scaleX(1.0805);-webkit-text-stroke:0;">07/07/2025</span>
<span class="t" style="top:255px;font-size:5.05px;color:#6a6a6a;left:279.10px;transform-origin:0 50%;transform:scaleX(1.0607);-webkit-text-stroke:0;">08/01/2025</span>
<span class="t" style="top:255px;font-size:5.05px;color:#6a6a6a;right:632.80px;transform-origin:100% 50%;transform:scaleX(1.0000);-webkit-text-stroke:0;">$13,000.00</span>
<span class="t" style="top:255px;font-size:5.05px;color:#6a6a6a;right:585.20px;transform-origin:100% 50%;transform:scaleX(1.0000);-webkit-text-stroke:0;">$16,900.00</span>
<span class="t" style="top:255px;font-size:5.05px;color:#6a6a6a;right:537.50px;transform-origin:100% 50%;transform:scaleX(1.0000);-webkit-text-stroke:0;">$130.00</span>
<span class="t" style="top:255px;font-size:5.05px;color:#6a6a6a;right:489.60px;transform-origin:100% 50%;transform:scaleX(1.0000);-webkit-text-stroke:0;">$130.00</span>
<span class="t" style="top:255px;font-size:5.05px;color:#6a6a6a;right:441.50px;transform-origin:100% 50%;transform:scaleX(1.0000);-webkit-text-stroke:0;">$420.00</span>
<span class="t" style="top:255px;font-size:5.05px;color:#6a6a6a;right:381.50px;transform-origin:100% 50%;transform:scaleX(1.0000);-webkit-text-stroke:0;">$13,130.00</span>
<span class="t" style="top:255px;font-size:5.05px;color:#6a6a6a;right:322.30px;transform-origin:100% 50%;transform:scaleX(1.0000);-webkit-text-stroke:0;">$17,450.00</span>
<span class="t" style="top:255px;font-size:5.05px;color:#6a6a6a;right:262.50px;transform-origin:100% 50%;transform:scaleX(1.0000);-webkit-text-stroke:0;">$17,450.00</span>
<span class="t" style="top:255px;font-size:5.05px;color:#6a6a6a;right:214.50px;transform-origin:100% 50%;transform:scaleX(1.0000);-webkit-text-stroke:0;">$4,320.00</span>
<span class="t" style="top:255px;font-size:5.05px;color:#6a6a6a;right:174.40px;transform-origin:100% 50%;transform:scaleX(1.0000);-webkit-text-stroke:0;">24.76</span>
<span class="t" style="top:265px;font-size:5.05px;color:#222;left:128.00px;transform-origin:0 50%;transform:scaleX(0.8554);-webkit-text-stroke:0;">TOTALS</span>
<span class="t" style="top:265px;font-size:5.05px;color:#222;right:632.80px;transform-origin:100% 50%;transform:scaleX(1.0000);-webkit-text-stroke:0;">$33,000.00</span>
<span class="t" style="top:265px;font-size:5.05px;color:#222;right:585.20px;transform-origin:100% 50%;transform:scaleX(1.0000);-webkit-text-stroke:0;">$42,900.00</span>
<span class="t" style="top:265px;font-size:5.05px;color:#222;right:537.50px;transform-origin:100% 50%;transform:scaleX(1.0000);-webkit-text-stroke:0;">$350.00</span>
<span class="t" style="top:265px;font-size:5.05px;color:#222;right:489.60px;transform-origin:100% 50%;transform:scaleX(1.0000);-webkit-text-stroke:0;">$350.00</span>
<span class="t" style="top:265px;font-size:5.05px;color:#222;right:441.50px;transform-origin:100% 50%;transform:scaleX(1.0000);-webkit-text-stroke:0;">$1,060.00</span>
<span class="t" style="top:265px;font-size:5.05px;color:#222;right:381.50px;transform-origin:100% 50%;transform:scaleX(1.0000);-webkit-text-stroke:0;">$33,350.00</span>
<span class="t" style="top:265px;font-size:5.05px;color:#222;right:322.30px;transform-origin:100% 50%;transform:scaleX(1.0000);-webkit-text-stroke:0;">$44,310.00</span>
<span class="t" style="top:265px;font-size:5.05px;color:#222;right:262.50px;transform-origin:100% 50%;transform:scaleX(1.0000);-webkit-text-stroke:0;">$44,310.00</span>
<span class="t" style="top:265px;font-size:5.05px;color:#222;right:214.50px;transform-origin:100% 50%;transform:scaleX(1.0000);-webkit-text-stroke:0;">$10,960.00</span>
<span class="t" style="top:265px;font-size:5.05px;color:#222;right:174.40px;transform-origin:100% 50%;transform:scaleX(1.0000);-webkit-text-stroke:0;">24.73</span>
</div>
<div id="over">
<svg class="r" style="left:320.00px;top:195.70px;" width="514" height="91.8" viewBox="0 0 514 91.8"><rect x="1.25" y="1.3" width="511.5" height="89.2" fill="none" stroke="#13a84b" stroke-width="2.5"/></svg>
<div class="r" style="left:997.30px;top:111.60px;width:2.70px;height:340.70px;background:#c6c6c6;"></div>
<div class="r" style="left:997.30px;top:116.60px;width:2.70px;height:47.80px;background:#8a8a8a;"></div>
<svg class="r" style="left:996.70px;top:112.00px;" width="3.4" height="2.6" viewBox="0 0 3.4 2.6"><path d="M0 2.6 L1.7 0.2 L3.4 2.6Z" fill="#222"/></svg>
<svg class="r" style="left:996.70px;top:455.30px;" width="3.4" height="2.6" viewBox="0 0 3.4 2.6"><path d="M0 0 L1.7 2.4 L3.4 0Z" fill="#222"/></svg>
<div class="r" style="left:109.00px;top:458.60px;width:881.40px;height:3.60px;background:#bcbcbc;"></div>
<div class="r" style="left:226.00px;top:458.60px;width:657.00px;height:3.60px;background:#9b9b9b;"></div>
<svg class="r" style="left:104.00px;top:458.60px;" width="2.4" height="3.6" viewBox="0 0 2.4 3.6"><path d="M2.4 0 L0.2 1.8 L2.4 3.6Z" fill="#222"/></svg>
<svg class="r" style="left:994.60px;top:458.60px;" width="2.4" height="3.6" viewBox="0 0 2.4 3.6"><path d="M0 0 L2.2 1.8 L0 3.6Z" fill="#222"/></svg>
</div>
</div></body></html>
